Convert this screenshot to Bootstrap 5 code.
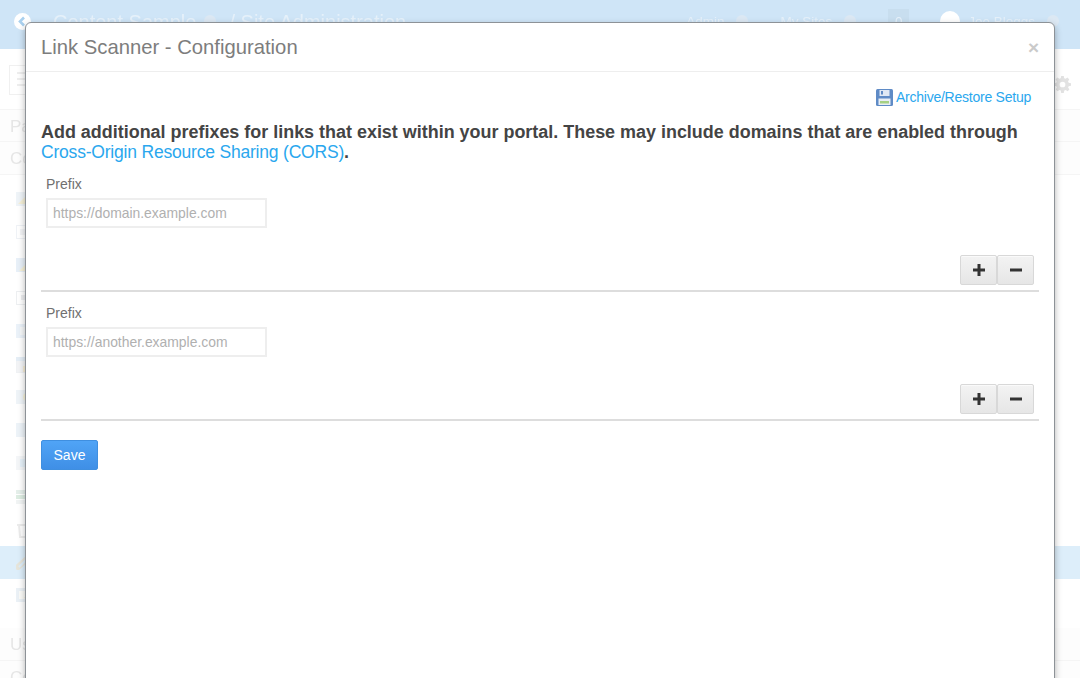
<!DOCTYPE html>
<html lang="en">
<head>
<meta charset="utf-8">
<title>Link Scanner - Configuration</title>
<link rel="stylesheet" href="https://cdn.jsdelivr.net/npm/bootstrap@5.3.0/dist/css/bootstrap.min.css">
<style>
html,body{height:678px;overflow:hidden}
body{font-family:"Liberation Sans",Arial,sans-serif;background:#fff;color:#555;position:relative}
.pg-top{height:49px;background:#cfe5f7;color:#e6f1fa;padding-left:14px;filter:blur(.6px)}
.pg-back{width:17px;height:17px;margin-top:13px;margin-right:22px}
.pg-crumb{font-size:20px;margin-top:9px;line-height:26px}
.pg-dot{width:12px;height:12px;border-radius:50%;background:#dce8f3;margin:15px 13px 0 8px}
.pg-right{margin-left:auto;font-size:13.5px;padding-top:12px;padding-right:21px}
.pg-right .pg-dot{margin:3px 0 0 12px}
.pg-ml{margin-left:32px}
.pg-ava{width:20px;height:20px;border-radius:50%;background:#fff;margin:-1px 8px 0 31px}
.pg-count{width:21px;height:26px;background:#c8deef;text-align:center;line-height:26px;margin:-3px 0 0 32px}
.pg-side{width:100%;filter:blur(.7px);color:#e6e6e6}
.pg-tool{margin:16px 0 0 9px;width:40px;height:30px;border:1px solid #f0f0f0;padding:6px 7px 0}
.pg-tool i{display:block;height:2px;width:100%;background:#eee;margin-bottom:4px}
.pg-head{height:33px;font-size:17px;line-height:33px;padding-left:10px;border-bottom:1px solid #f5f5f5;background:#fdfdfd}
.pg-first{margin-top:14px;border-top:1px solid #f5f5f5}
.pg-rows{margin-top:8px}
.pg-row{height:33px;padding:9px 0 0 16px;line-height:0}
.pg-row svg{opacity:.7}
.pg-row.pg-on{background:#ddeefa}
.pg-gear{position:absolute;left:1054px;top:76px;color:#e2e2e2;width:17px;height:17px}
.cfg-modal{position:absolute;left:25px;top:22px;width:1030px;height:720px;background:#fff;border:1px solid #8d9297;border-radius:6px;box-shadow:0 3px 7px rgba(0,0,0,.3)}
.cfg-head{height:49px;padding:0 15px;border-bottom:1px solid #eee}
.cfg-title{font-size:20.25px;line-height:24px;color:#7d7d7d;font-weight:400;margin:0}
.cfg-x{font-size:19px;font-weight:700;color:#cacaca;line-height:1}
.cfg-body{padding:15px}
.cfg-arch{height:20px;font-size:14px;letter-spacing:-.24px;line-height:20px;padding-right:8px}
.cfg-arch a,.cfg-intro a{color:#2aa7ee;text-decoration:none}
.cfg-arch a{display:inline-flex;align-items:center;gap:3px}
.cfg-intro{font-size:17.95px;line-height:20px;font-weight:700;color:#444;margin:15px 0 0}
.cfg-intro a{font-weight:400;font-size:17.5px;letter-spacing:-.2px;line-height:1}
.cfg-item{padding:0 5px;height:129px}
.cfg-first{margin-top:12px}
.cfg-lab{display:block;font-size:14px;line-height:20px;margin:0 0 4px;color:#707070}
.cfg-input{width:221px;height:30px;border:2px solid #eee;border-radius:0;padding:0 5px;font-size:13.9px;color:#555;box-shadow:none}
.cfg-input::placeholder{color:#b0b0b0}
.cfg-btns{margin-top:27px;height:30px}
.cfg-btn{width:37px;height:30px;padding:0;background:linear-gradient(#f3f3f3,#e6e6e6);border:1px solid #d8d8d8;border-radius:2px;box-shadow:inset 0 1px 0 #fafafa;color:#333;display:flex;align-items:center;justify-content:center}
.cfg-rule{margin:5px -5px 0;border:0;border-top:2px solid #ddd;opacity:1}
.cfg-save{width:57px;height:30px;padding:0;font-size:14px;background:linear-gradient(#50a4f6,#3f8fe6);border:1px solid #3f8fe0;border-radius:2px;margin-top:8px;color:#fff;display:block}
</style>
</head>
<body>
<div class="pg-top d-flex">
  <svg class="pg-back" viewBox="0 0 17 17" aria-hidden="true"><circle cx="8.5" cy="8.5" r="8.5" fill="#fff"/><path d="M10 4.5 6 8.5l4 4" fill="none" stroke="#a9d0ee" stroke-width="2.6"/></svg>
  <span class="pg-crumb">Content Sample</span><span class="pg-dot"></span><span class="pg-crumb">/ Site Administration</span>
  <div class="pg-right d-flex">
    <span>Admin</span><span class="pg-dot"></span><span class="pg-ml">My Sites</span><span class="pg-dot"></span>
    <span class="pg-count">0</span><span class="pg-ava"></span><span>Joe Bloggs</span><span class="pg-dot"></span>
  </div>
</div>
<div class="pg-side">
  <div class="pg-tool"><i></i><i></i><i></i></div>
  <div class="pg-head pg-first">Pages</div>
  <div class="pg-head">Content</div>
  <div class="pg-rows">
    <div class="pg-row"><svg width="16" height="14" viewBox="0 0 16 14" aria-hidden="true"><rect width="16" height="14" fill="#e9eff5"/><path d="M2 12 12 2v10z" fill="#f3ecc8"/></svg></div>
    <div class="pg-row"><svg width="16" height="14" viewBox="0 0 16 14" aria-hidden="true"><rect x=".5" y=".5" width="15" height="13" fill="#fff" stroke="#e8edf2"/><rect x="4" y="4" width="9" height="6" fill="#eef0f2"/></svg></div>
    <div class="pg-row"><svg width="16" height="14" viewBox="0 0 16 14" aria-hidden="true"><rect width="16" height="14" fill="#dfeaf5"/><path d="M3 13 14 2v11z" fill="#f3ecc8"/></svg></div>
    <div class="pg-row"><svg width="16" height="14" viewBox="0 0 16 14" aria-hidden="true"><rect x=".5" y=".5" width="15" height="13" fill="#fff" stroke="#e6e9ec"/><rect x="5" y="4" width="5" height="5" fill="#e4e6e8"/></svg></div>
    <div class="pg-row"><svg width="16" height="14" viewBox="0 0 16 14" aria-hidden="true"><rect width="16" height="14" fill="#e3edf7"/><rect x="4" y="3" width="7" height="8" fill="#f3f5f7"/></svg></div>
    <div class="pg-row"><svg width="16" height="16" viewBox="0 0 16 16" aria-hidden="true"><rect width="16" height="16" fill="#eef0f2" stroke="#e6eaee"/><rect width="16" height="4" fill="#dbe7f2"/><rect x="7" y="9" width="9" height="6" fill="#f6e9c6"/></svg></div>
    <div class="pg-row"><svg width="16" height="14" viewBox="0 0 16 14" aria-hidden="true"><rect width="16" height="14" fill="#e8eff6"/><circle cx="11" cy="7" r="4" fill="#f5efcb"/></svg></div>
    <div class="pg-row"><svg width="16" height="14" viewBox="0 0 16 14" aria-hidden="true"><rect width="16" height="14" fill="#e6eef6"/><rect x="9" y="6" width="2" height="7" fill="#f3e2b4"/><rect x="12" y="3" width="2" height="10" fill="#dfe9c8"/></svg></div>
    <div class="pg-row"><svg width="16" height="14" viewBox="0 0 16 14" aria-hidden="true"><rect width="16" height="14" fill="#f0f3f6"/><rect x="4" y="3" width="12" height="8" fill="#dcecf7"/></svg></div>
    <div class="pg-row"><svg width="16" height="16" viewBox="0 0 16 16" aria-hidden="true"><rect y="1" width="16" height="4" fill="#dbe9e2"/><rect y="6" width="16" height="4" fill="#cfe6d6"/><rect y="11" width="16" height="4" fill="#ecefef"/></svg></div>
    <div class="pg-row"><svg width="16" height="16" viewBox="0 0 16 16" aria-hidden="true"><path d="M1 3h14M3 3l1 12h9l1-12" fill="none" stroke="#e4e4e4" stroke-width="2"/></svg></div>
    <div class="pg-row pg-on"><svg width="16" height="15" viewBox="0 0 16 15" aria-hidden="true"><path d="M2 12 12 3" stroke="#ebe2cf" stroke-width="6" stroke-linecap="round"/><path d="M3 12 11 4" stroke="#ddeefa" stroke-width="2"/></svg></div>
    <div class="pg-row"><svg width="16" height="14" viewBox="0 0 16 14" aria-hidden="true"><rect width="16" height="14" fill="#e3ebf3"/><rect x="3" y="3" width="10" height="8" fill="#f9f9f6"/><path d="M8 10l5-5v6z" fill="#f2e6bf"/></svg></div>
  </div>
  <div class="pg-head mt-3">Users</div>
  <div class="pg-head">Content</div>
</div>
<svg class="pg-gear" viewBox="0 0 16 16" aria-hidden="true"><path fill="currentColor" fill-rule="evenodd" d="M6.8 0h2.4l.4 2.1 1.3.6 1.8-1.2 1.7 1.7-1.2 1.8.6 1.3 2.2.5v2.4l-2.2.4-.5 1.3 1.2 1.8-1.7 1.7-1.8-1.2-1.3.5-.5 2.2H6.8l-.4-2.2-1.3-.5-1.8 1.2-1.7-1.7 1.2-1.8-.6-1.3L0 9.2V6.8l2.2-.5.5-1.3-1.2-1.8 1.7-1.7 1.8 1.2 1.3-.6zM8 5.3a2.7 2.7 0 1 0 0 5.4 2.7 2.7 0 0 0 0-5.4z"/></svg>

<div class="cfg-modal">
  <div class="cfg-head d-flex align-items-center justify-content-between">
    <h4 class="cfg-title">Link Scanner - Configuration</h4>
    <span class="cfg-x">×</span>
  </div>
  <div class="cfg-body">
    <div class="cfg-arch text-end">
      <a href="#"><svg width="17" height="17" viewBox="0 0 17 17" aria-hidden="true"><rect width="17" height="17" rx="1.5" fill="#5f8bc6"/><rect x="3.5" y="1" width="10" height="6" fill="#dfe8f4"/><rect x="5" y="2" width="2" height="3.5" fill="#5f8bc6"/><rect x="2.5" y="9.5" width="12" height="6.5" fill="#e8eef4"/><rect x="4" y="12" width="9" height="2.5" fill="#a5d083"/></svg>Archive/Restore Setup</a>
    </div>
    <p class="cfg-intro">Add additional prefixes for links that exist within your portal. These may include domains that are enabled through <a href="#">Cross-Origin Resource Sharing (CORS)</a>.</p>
    <div class="cfg-item cfg-first">
      <label class="cfg-lab">Prefix</label>
      <input class="form-control cfg-input" type="text" placeholder="https://domain.example.com">
      <div class="cfg-btns d-flex justify-content-end">
        <button class="btn cfg-btn" type="button"><svg width="14" height="14" viewBox="0 0 14 14" aria-hidden="true"><path fill="currentColor" d="M5.5 1h3v4.500H13v3H8.500V13h-3V8.500H1v-3h4.500z"/></svg></button>
        <button class="btn cfg-btn" type="button"><svg width="14" height="14" viewBox="0 0 14 14" aria-hidden="true"><path fill="currentColor" d="M1 5.500h12v3H1z"/></svg></button>
      </div>
      <hr class="cfg-rule">
    </div>
    <div class="cfg-item">
      <label class="cfg-lab">Prefix</label>
      <input class="form-control cfg-input" type="text" placeholder="https://another.example.com">
      <div class="cfg-btns d-flex justify-content-end">
        <button class="btn cfg-btn" type="button"><svg width="14" height="14" viewBox="0 0 14 14" aria-hidden="true"><path fill="currentColor" d="M5.5 1h3v4.500H13v3H8.500V13h-3V8.500H1v-3h4.500z"/></svg></button>
        <button class="btn cfg-btn" type="button"><svg width="14" height="14" viewBox="0 0 14 14" aria-hidden="true"><path fill="currentColor" d="M1 5.500h12v3H1z"/></svg></button>
      </div>
      <hr class="cfg-rule">
    </div>
    <button class="btn btn-primary cfg-save" type="button">Save</button>
  </div>
</div>
<script src="https://cdn.jsdelivr.net/npm/bootstrap@5.3.0/dist/js/bootstrap.bundle.min.js"></script>
</body>
</html>
